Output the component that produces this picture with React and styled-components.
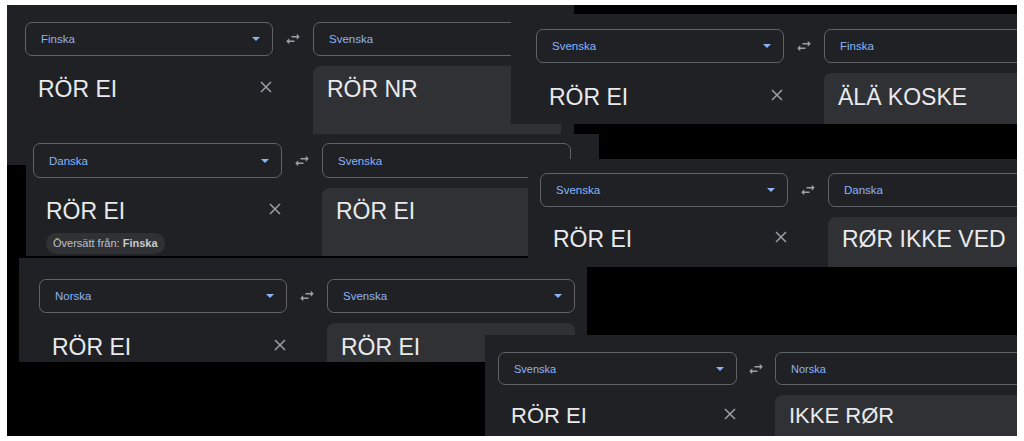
import React from "react";
import styled, { createGlobalStyle } from "styled-components";

const GlobalStyle = createGlobalStyle`
  html, body {
    margin: 0;
    padding: 0;
    background: #ffffff;
    height: 441px;
    overflow: hidden;
  }
`;

// collage of cropped translate screenshots, each one placed on the canvas
const panels = [
  { x: 0, y: 0, w: 567, h: 160, pt: 17, pl: 18, col: 248, gap: 40, selH: 34, textTop: 8.5, from: "Finska", to: "Svenska", src: "RÖR EI", out: "RÖR NR" },
  { x: 504, y: 9, w: 506, h: 110, pt: 15, pl: 25, col: 248, gap: 40, selH: 34, textTop: 9.5, from: "Svenska", to: "Finska", src: "RÖR EI", out: "ÄLÄ KOSKE" },
  { x: 19, y: 129, w: 573, h: 122, pt: 9, pl: 7, col: 249, gap: 40, selH: 35, textTop: 8.5, from: "Danska", to: "Svenska", src: "RÖR EI", out: "RÖR EI", detected: "Finska" },
  { x: 12, y: 253, w: 568, h: 104, pt: 21, pl: 20, col: 248, gap: 40, selH: 34, textTop: 9.5, from: "Norska", to: "Svenska", src: "RÖR EI", out: "RÖR EI" },
  { x: 521, y: 154, w: 489, h: 108, pt: 14, pl: 12, col: 248, gap: 40, selH: 34, textTop: 7.5, from: "Svenska", to: "Danska", src: "RÖR EI", out: "RØR IKKE VED" },
  { x: 478, y: 330, w: 532, h: 101, pt: 17, pl: 13, col: 239, col2: 270, gap: 38, selH: 33, textTop: 7, fs: 22, labelFs: 11, from: "Svenska", to: "Norska", src: "RÖR EI", out: "IKKE RØR" },
];

const App = () => {
  return (
    <>
      <GlobalStyle />
      <Canvas>
        {panels.map((p, i) => (
          <Panel key={i} $x={p.x} $y={p.y} $w={p.w} $h={p.h} $pt={p.pt} $pl={p.pl}>
            <Layout $col={p.col} $col2={p.col2 || p.col} $gap={p.gap} $selH={p.selH}>
              <LangSelect $fs={p.labelFs || 11.5}>
                <span>{p.from}</span>
                <Arrow />
              </LangSelect>
              <SwapCell>
                <svg width="18" height="18" viewBox="0 0 24 24" fill="currentColor">
                  <path d="M6.99 11L3 15l3.99 4v-3H14v-2H6.99v-3zM21 9l-3.99-4v3H10v2h7.01v3L21 9z" />
                </svg>
              </SwapCell>
              <LangSelect $fs={p.labelFs || 11.5}>
                <span>{p.to}</span>
                <Arrow />
              </LangSelect>

              <Source $pt={p.textTop}>
                <SourceLine>
                  <BigText $fs={p.fs || 23}>{p.src}</BigText>
                  <ClearIcon width="12" height="12" viewBox="0 0 12 12">
                    <path d="M1 1L11 11M11 1L1 11" stroke="#9aa0a6" strokeWidth="1.5" />
                  </ClearIcon>
                </SourceLine>
                {p.detected && (
                  <Badge>
                    Översätt från:&nbsp;<b>{p.detected}</b>
                  </Badge>
                )}
              </Source>
              <SwapCell />
              <Target $pt={p.textTop}>
                <BigText $fs={p.fs || 23}>{p.out}</BigText>
              </Target>
            </Layout>
          </Panel>
        ))}
      </Canvas>
    </>
  );
};

export default App;

const Canvas = styled.div`
  position: relative;
  width: 1010px;
  height: 431px;
  margin: 5px 0 0 7px;
  background: #000000;
  overflow: hidden;
  font-family: "Liberation Sans", Arial, sans-serif;
`;

const Panel = styled.div`
  position: absolute;
  left: ${(p) => p.$x}px;
  top: ${(p) => p.$y}px;
  width: ${(p) => p.$w}px;
  height: ${(p) => p.$h}px;
  padding: ${(p) => p.$pt}px 0 0 ${(p) => p.$pl}px;
  box-sizing: border-box;
  background: #202124;
  overflow: hidden;
`;

const Layout = styled.div`
  display: grid;
  grid-template-columns: ${(p) => p.$col}px ${(p) => p.$gap}px ${(p) => p.$col2}px;
  grid-template-rows: ${(p) => p.$selH}px auto;
  row-gap: 10px;
`;

const LangSelect = styled.div`
  display: flex;
  align-items: center;
  justify-content: space-between;
  border: 1px solid #5f6368;
  border-radius: 7px;
  padding: 0 12px 0 15px;
  box-sizing: border-box;
  color: #8ab4f8;
  font-size: ${(p) => p.$fs}px;
`;

const Arrow = styled.span`
  width: 0;
  height: 0;
  border-left: 4px solid transparent;
  border-right: 4px solid transparent;
  border-top: 4px solid #8ab4f8;
`;

const SwapCell = styled.div`
  display: flex;
  align-items: center;
  justify-content: center;
  color: #9aa0a6;
`;

const Source = styled.div`
  display: flex;
  flex-direction: column;
  padding: ${(p) => p.$pt}px 1px 0 13px;
`;

const SourceLine = styled.div`
  display: flex;
  justify-content: space-between;
  align-items: flex-start;
`;

const BigText = styled.div`
  font-size: ${(p) => p.$fs}px;
  line-height: 28px;
  color: #e8eaed;
  white-space: nowrap;
`;

const ClearIcon = styled.svg`
  margin-top: 6px;
  flex-shrink: 0;
`;

const Badge = styled.span`
  align-self: flex-start;
  display: inline-flex;
  align-items: center;
  height: 21px;
  margin-top: 8px;
  padding: 0 7px;
  border-radius: 11px;
  background: #303134;
  color: #bdc1c6;
  font-size: 11px;

  b {
    font-weight: 700;
    color: #c8cacd;
  }
`;

const Target = styled.div`
  min-height: 140px;
  padding: ${(p) => p.$pt}px 14px 0;
  border-radius: 8px;
  background: #303134;
`;
